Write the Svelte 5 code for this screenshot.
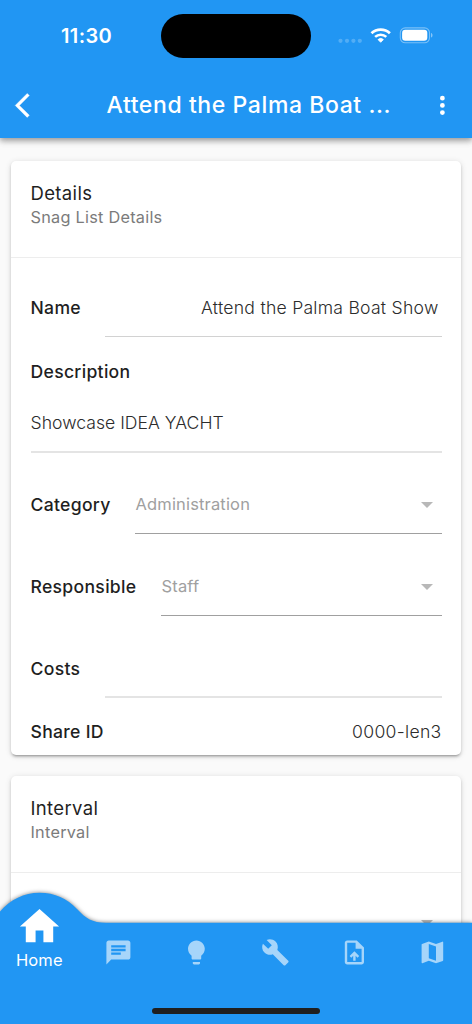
<script>
  const tabs = [
    { name: 'Messages', d: 'M20 2H4c-1.1 0-1.99.9-1.99 2L2 22l4-4h14c1.1 0 2-.9 2-2V4c0-1.1-.9-2-2-2zM6 9h12v2H6V9zm8 5H6v-2h8v2zm4-6H6V6h12v2z' },
    { name: 'Ideas', d: 'M9 21c0 .55.45 1 1 1h4c.55 0 1-.45 1-1v-1H9v1zm3-19C8.14 2 5 5.14 5 9c0 2.38 1.19 4.47 3 5.74V17c0 .55.45 1 1 1h6c.55 0 1-.45 1-1v-2.26c1.81-1.27 3-3.36 3-5.74 0-3.86-3.14-7-7-7z' },
    { name: 'Tools', d: 'M22.7 19l-9.1-9.1c.9-2.3.4-5-1.5-6.9-2-2-5-2.4-7.4-1.3L9 6 6 9 1.6 4.7C.4 7.1.9 10.1 2.9 12.1c1.9 1.9 4.6 2.4 6.9 1.5l9.1 9.1c.4.4 1 .4 1.4 0l2.3-2.3c.5-.4.5-1.1.1-1.4z' },
    { name: 'Upload', d: 'M14 2H6c-1.1 0-1.99.9-1.99 2L4 20c0 1.1.89 2 1.99 2H18c1.1 0 2-.9 2-2V8l-6-6zm4 18H6V4h7v5h5v11zM8 15.01l1.41 1.41L11 14.84V19h2v-4.16l1.59 1.59L16 15.01 12.01 11 8 15.01z' },
    { name: 'Map', d: 'M20.5 3l-.16.03L15 5.1 9 3 3.36 4.9c-.21.07-.36.25-.36.48V20.5c0 .28.22.5.5.5l.16-.03L9 18.9l6 2.1 5.64-1.9c.21-.07.36-.25.36-.48V3.5c0-.28-.22-.5-.5-.5zM15 19l-6-2.11V5l6 2.11V19z' }
  ];
</script>

{#snippet arrow()}
  <svg class="arrow" width="12" height="6" viewBox="0 0 12 6"><path d="M0 0h12L6 6z" /></svg>
{/snippet}

<div class="screen">
  <header>
    <div class="status">
      <span class="time">11:30</span>
      <span class="island"></span>
      <svg class="signals" width="100" height="20" viewBox="0 0 100 20" fill="#fff">
        <g opacity=".22">
          <circle cx="4.5" cy="14.8" r="2.1" /><circle cx="11" cy="14.8" r="2.1" />
          <circle cx="17.4" cy="14.8" r="2.1" /><circle cx="23.8" cy="14.8" r="2.1" />
        </g>
        <path d="M44.7 16.300l2.700-2.700a4 4 0 0 0-5.400 0z" stroke="#fff" stroke-width=".8" stroke-linejoin="round" />
        <path d="M35.500 7.300a13.500 13.500 0 0 1 18.400 0" fill="none" stroke="#fff" stroke-width="2.800" />
        <path d="M39.100 10.900a8.200 8.200 0 0 1 11.200 0" fill="none" stroke="#fff" stroke-width="2.600" />
        <rect x="64.300" y="1.900" width="29.200" height="14.800" rx="4.900" fill="none" stroke="#fff" stroke-opacity=".4" stroke-width="1.100" />
        <rect x="66.100" y="3.800" width="25.200" height="11" rx="3.200" />
        <path d="M95 6.900c2 .7 2 3.900 0 4.600z" opacity=".45" />
      </svg>
    </div>
    <div class="bar">
      <svg class="back" width="28.8" height="28.8" viewBox="0 0 24 24"><path d="M17.77 3.77L16 2 6 12l10 10 1.77-1.77L9.54 12z" /></svg>
      <h1>Attend the Palma Boat ...</h1>
      <svg class="more" width="28.8" height="28.8" viewBox="0 0 24 24"><path d="M12 8a2 2 0 1 0 0-4 2 2 0 0 0 0 4zm0 2a2 2 0 1 0 0 4 2 2 0 0 0 0-4zm0 6a2 2 0 1 0 0 4 2 2 0 0 0 0-4z" /></svg>
    </div>
  </header>

  <main>
    <section class="card details">
      <div class="head">
        <h2>Details</h2>
        <p>Snag List Details</p>
      </div>
      <div class="row name">
        <span class="label">Name</span>
        <div class="field line-thin right">Attend the Palma Boat Show</div>
      </div>
      <div class="description">
        <span class="label">Description</span>
        <div class="field">Showcase IDEA YACHT</div>
      </div>
      <div class="row category">
        <span class="label">Category</span>
        <div class="field select"><span>Administration</span>{@render arrow()}</div>
      </div>
      <div class="row responsible">
        <span class="label">Responsible</span>
        <div class="field select"><span>Staff</span>{@render arrow()}</div>
      </div>
      <div class="row costs">
        <span class="label">Costs</span>
        <div class="field"></div>
      </div>
      <div class="share">
        <span class="label">Share ID</span>
        <span class="value">0000-len3</span>
      </div>
    </section>
    <section class="card interval">
      <div class="head">
        <h2>Interval</h2>
        <p>Interval</p>
      </div>
      <div class="cut">{@render arrow()}</div>
    </section>
  </main>

  <nav>
    <svg class="shape" width="472" height="144" viewBox="0 0 472 144">
      <path d="M0 31.5C10.500 19.500 24 12.700 39.500 12.700C55 12.700 67 18.500 77 29C86 38.500 92 42.700 106 42.700H472V144H0Z" />
    </svg>
    <div class="tabs">
      <div class="tab active">
        <svg width="47" height="47" viewBox="0 0 24 24"><path d="M10 20v-6h4v6h5v-8h3L12 3 2 12h3v8z" /></svg>
        <span>Home</span>
      </div>
      {#each tabs as tab (tab.name)}
        <div class="tab">
          <svg width="28.8" height="28.8" viewBox="0 0 24 24"><path d={tab.d} /></svg>
        </div>
      {/each}
    </div>
    <div class="indicator"></div>
  </nav>
</div>

<style>
  :global(body) { margin: 0; }
  * { box-sizing: border-box; }
  svg { display: block; flex: none; }
  h1, h2, p { margin: 0; font-weight: 400; }
  .screen {
    position: relative;
    width: 472px;
    height: 1024px;
    overflow: hidden;
    background: #fafafa;
    color: #1f1f1f;
    font-family: Inter, sans-serif;
    font-size: 17.6px;
    white-space: nowrap;
  }
  header {
    position: relative;
    height: 138px;
    background: #2196f3;
    color: #fff;
    box-shadow: 0 2px 5px rgba(0,0,0,.22), 0 4px 6px rgba(0,0,0,.14), 0 1px 10px rgba(0,0,0,.1);
  }
  .status { display: flex; height: 72px; align-items: center; }
  .time { width: 161px; padding-left: 61px; font-size: 20px; font-weight: 600; letter-spacing: .4px; }
  .island { width: 150px; height: 44px; border-radius: 22px; background: #000; }
  .signals { margin-left: 25px; }
  .bar { display: flex; align-items: center; height: 66px; padding: 0 15px 0 7.700px; }
  .bar svg { fill: #fff; }
  .back { stroke: #fff; stroke-width: .3px; }
  h1 { flex: 1; padding-left: 33px; text-align: center; font-size: 23px; font-weight: 500; letter-spacing: .59px; }
  main { display: flex; flex-direction: column; gap: 21px; padding: 23px 11px 0; }
  .card {
    background: #fff;
    border-radius: 5px;
    box-shadow: 0 3px 2px -2px rgba(0,0,0,.2), 0 2px 3px rgba(0,0,0,.16), 0 1px 6px rgba(0,0,0,.12);
  }
  .details { height: 594px; }
  .interval { height: 300px; }
  .head { height: 97px; padding: 20px 19.500px 0; border-bottom: 1px solid #ededed; }
  h2 { font-size: 18.500px; line-height: 24px; letter-spacing: .35px; }
  .head p { font-size: 16.300px; line-height: 24px; letter-spacing: .25px; color: #7b7b7b; }
  .row { display: flex; padding: 0 19.500px; }
  .label { font-weight: 500; line-height: 24px; letter-spacing: .3px; }
  .field { flex: 1; line-height: 24px; font-weight: 300; color: #2c2c2c; border-bottom: 2px solid #e4e4e4; letter-spacing: .25px; }
  .line-thin { border-bottom: 1px solid #d2d2d2; }
  .right { text-align: right; padding-right: 3px; }
  .name { height: 79px; padding-top: 38px; }
  .name .label, .costs .label { width: 74.500px; }
  .description { height: 115px; padding: 23px 19.500px 0; }
  .description .field { height: 42px; margin-top: 27px; letter-spacing: .02px; }
  .category { height: 82px; padding-top: 41px; }
  .category .label { width: 104.500px; }
  .responsible { height: 82px; padding-top: 41px; }
  .responsible .label { width: 130.500px; }
  .select { display: flex; justify-content: space-between; padding: 0 8.500px 0 .5px; border-bottom: 1px solid #a0a0a0; color: #a0a0a0; font-size: 16.500px; font-weight: 400; letter-spacing: .16px; line-height: 23px; }
  .arrow { margin-top: 9px; fill: #b8b8b8; }
  .costs { height: 82px; padding-top: 41px; }
  .share { display: flex; justify-content: space-between; padding: 22px 19.500px 0; line-height: 24px; }
  .value { font-weight: 300; letter-spacing: .3px; color: #2c2c2c; }
  .cut { display: flex; justify-content: flex-end; padding: 38px 28px 0; }
  nav { position: absolute; left: 0; bottom: 0; width: 472px; height: 144px; }
  .shape { position: absolute; inset: 0; fill: #2196f3; filter: drop-shadow(0 0 2px rgba(0,0,0,.5)); overflow: visible; }
  .tabs { position: relative; display: grid; grid-template-columns: repeat(6, 1fr); height: 128px; }
  .tab { display: flex; flex-direction: column; align-items: center; padding-top: 58.200px; }
  .tab svg { fill: #a6d5fa; }
  .active { padding-top: 22.500px; color: #fff; }
  .active svg { fill: #fff; }
  .active span { font-size: 16.500px; line-height: 24px; margin-top: -1.500px; letter-spacing: .1px; }
  .indicator { position: relative; width: 168px; height: 6px; margin: 0 auto; border-radius: 3px; background: #1f1f1f; }
</style>
